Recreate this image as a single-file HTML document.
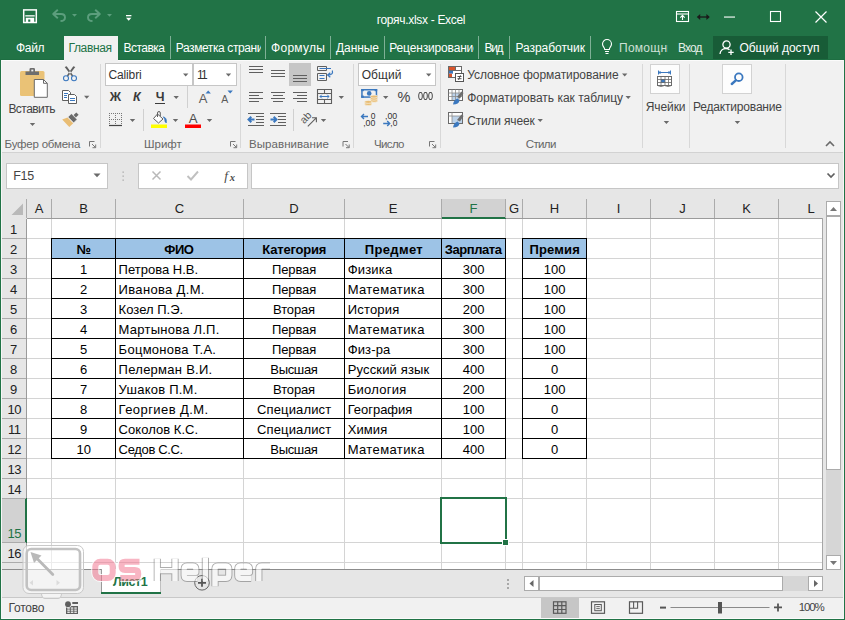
<!DOCTYPE html>
<html><head><meta charset="utf-8"><title>excel</title>
<style>
*{box-sizing:border-box;margin:0;padding:0}
html,body{width:845px;height:620px;overflow:hidden;background:#e6e6e6;font-family:"Liberation Sans",sans-serif;}
.abs{position:absolute}
#app{position:relative;width:845px;height:620px;overflow:hidden;background:#e6e6e6}
.t{position:absolute;white-space:nowrap;line-height:1}
.tab{position:absolute;top:41px;color:#fff;font-size:13px;line-height:14px;white-space:nowrap}
.sep{position:absolute;top:36px;width:1px;height:23px;background:#7fb096}
.rl{position:absolute;font-size:12.5px;color:#444;white-space:nowrap;line-height:14px}
.gl{position:absolute;font-size:12.5px;color:#666;white-space:nowrap;line-height:14px}
.ch{position:absolute;top:201px;font-size:13px;color:#222;text-align:center;line-height:15px}
.rh{position:absolute;left:1px;width:25px;font-size:13px;color:#222;text-align:center;line-height:15px}
.c{position:absolute;font-size:13px;color:#000;white-space:nowrap;line-height:15px;letter-spacing:-0.2px}
.hb{font-weight:bold}
.vl{position:absolute;width:1px;background:#d4d4d4}
.hl{position:absolute;height:1px;background:#d4d4d4}
.bk{position:absolute;background:#000}
</style></head><body><div id="app">

<div class="abs" style="left:0;top:0;width:845px;height:60px;background:#217346"></div>
<div class="abs" style="left:1px;top:60px;width:843px;height:92px;background:#f1f1f1"></div>
<div class="abs" style="left:1px;top:152px;width:843px;height:1px;background:#d2d2d2"></div>
<div class="abs" style="left:0;top:0;width:1px;height:620px;background:#217346"></div>
<div class="abs" style="left:844px;top:0;width:1px;height:620px;background:#217346"></div>
<div class="abs" style="left:0;top:619px;width:845px;height:1px;background:#217346"></div>
<div class="abs" style="left:1px;top:60px;width:843px;height:1px;background:#fbfbfb"></div>
<div class="abs" style="left:0px;top:59px;width:64px;height:1px;background:#1e6e42"></div><div class="abs" style="left:118px;top:59px;width:727px;height:1px;background:#1e6e42"></div>
<!-- title bar -->
<svg class="abs" style="left:0;top:0" width="845" height="36" viewBox="0 0 845 36">
 <!-- save icon -->
 <rect x="23.700" y="9.900" width="12.600" height="12.600" fill="none" stroke="#fff" stroke-width="1.500"/>
 <rect x="25.300" y="15.200" width="9.400" height="1.300" fill="#fff"/>
 <path d="M25.800 17.800 H34.200 V22.500 H30.300 V19.500 H28.200 V22.500 H25.800 Z" fill="#fff"/>
 <!-- undo -->
 <g fill="none" stroke="#5c9e7d" stroke-width="1.900" stroke-linejoin="round">
  <path d="M53.500 14 H61 Q65 14 65 17.500 Q65 21 60.500 21"/>
  <path d="M57.800 9.700 L53.200 14 L57.800 18.300"/>
 </g>
 <path d="M72 14 h5 l-2.500 2.800 z" fill="#5c9e7d"/>
 <!-- redo -->
 <g fill="none" stroke="#5c9e7d" stroke-width="1.900" stroke-linejoin="round">
  <path d="M99.500 14 H92 Q88 14 88 17.500 Q88 21 92.500 21"/>
  <path d="M95.200 9.700 L99.800 14 L95.200 18.300"/>
 </g>
 <path d="M107 14 h5 l-2.500 2.800 z" fill="#5c9e7d"/>
 <!-- customize -->
 <rect x="126" y="15" width="5.400" height="1.300" fill="#fff"/>
 <path d="M126 17.700 h5.400 l-2.700 3 z" fill="#fff"/>
 <!-- ribbon display options -->
 <g fill="none" stroke="#fff" stroke-width="1.1">
  <rect x="676.5" y="11.5" width="12" height="10"/>
  <path d="M676.5 14 H688.5"/>
  <path d="M682.5 20 V15.5 M680.3 17.6 L682.5 15.4 L684.7 17.6"/>
 </g>
 <!-- double arrow -->
 <g fill="none" stroke="#1a1a1a" stroke-width="1.3">
  <path d="M698.5 17 H708"/>
 </g>
 <path d="M696.8 17 l3.4 -3 v6 z M709.8 17 l-3.4 -3 v6 z" fill="#1a1a1a"/>
 <!-- minimize -->
 <rect x="724" y="16.5" width="11" height="1.1" fill="#fff"/>
 <!-- maximize -->
 <rect x="770.5" y="11.5" width="10" height="10" fill="none" stroke="#fff" stroke-width="1.1"/>
 <!-- close -->
 <path d="M815.5 11.5 L826.5 22.5 M826.5 11.5 L815.5 22.5" stroke="#fff" stroke-width="1.2" fill="none"/>
</svg>
<div class="t" style="left:376.70px;top:11.74px;font-size:12px;line-height:16px;color:#fff;letter-spacing:-0.311px;">горяч.xlsx - Excel</div>

<!-- tabs -->
<div class="abs" style="left:64px;top:36px;width:54px;height:25px;background:#f1f1f1"></div>
<div class="t" style="left:16.00px;top:39.84px;font-size:12px;line-height:16px;color:#fff;letter-spacing:-0.330px;">Файл</div>
<div class="t" style="left:68.50px;top:39.84px;font-size:12px;line-height:16px;color:#217346;letter-spacing:-0.365px;">Главная</div>
<div class="t" style="left:123.50px;top:39.84px;font-size:12px;line-height:16px;color:#fff;letter-spacing:-0.518px;">Вставка</div>
<div class="sep" style="left:170px"></div>
<div class="t" style="left:175.70px;top:39.84px;font-size:12px;line-height:16px;color:#fff;letter-spacing:-0.398px;width:85.5px;overflow:hidden;">Разметка страницы</div>
<div class="sep" style="left:265px"></div>
<div class="t" style="left:271.00px;top:39.84px;font-size:12px;line-height:16px;color:#fff;letter-spacing:0.295px;">Формулы</div>
<div class="sep" style="left:330px"></div>
<div class="t" style="left:336.00px;top:39.84px;font-size:12px;line-height:16px;color:#fff;letter-spacing:-0.070px;">Данные</div>
<div class="sep" style="left:384px"></div>
<div class="t" style="left:389.30px;top:39.84px;font-size:12px;line-height:16px;color:#fff;letter-spacing:-0.165px;width:85px;overflow:hidden;">Рецензирование</div>
<div class="sep" style="left:478px"></div>
<div class="t" style="left:484.50px;top:39.84px;font-size:12px;line-height:16px;color:#fff;letter-spacing:-1.360px;">Вид</div>
<div class="sep" style="left:509px"></div>
<div class="t" style="left:515.50px;top:39.84px;font-size:12px;line-height:16px;color:#fff;letter-spacing:-0.055px;">Разработчик</div>
<div class="sep" style="left:590px"></div>
<svg class="abs" style="left:599.6px;top:38.3px" width="14" height="18" viewBox="0 0 14 18"><g fill="none" stroke="#fff" stroke-width="1.1"><path d="M4.7 11.5 C4.7 9.5 2.5 8.7 2.5 6 A4.5 4.5 0 0 1 11.500 6 C11.5 8.700 9.300 9.500 9.3 11.5 Z"/><path d="M5 13.500 H9 M5.500 15.500 H8.500"/></g></svg>
<div class="t" style="left:619.00px;top:39.84px;font-size:12px;line-height:16px;color:#cfe0d6;letter-spacing:0.258px;width:49px;overflow:hidden;">Помощник</div>
<div class="t" style="left:678.00px;top:39.84px;font-size:12px;line-height:16px;color:#e4efe8;letter-spacing:-0.883px;">Вход</div>
<div class="abs" style="left:713px;top:36px;width:115px;height:23px;background:#185c37"></div>
<svg class="abs" style="left:718px;top:38px" width="18" height="18" viewBox="0 0 18 18"><g fill="none" stroke="#fff" stroke-width="1.3"><circle cx="8.5" cy="6.5" r="3.6"/><path d="M2 16 C2.200 12.500 5 10.500 8 10.500 C9.500 10.500 10.500 11 11.500 11.800"/><path d="M13 11.500 V17 M10.300 14.300 H15.700"/></g></svg>
<div class="t" style="left:739.50px;top:39.84px;font-size:12px;line-height:16px;color:#fff;letter-spacing:-0.058px;">Общий доступ</div>

<!-- ribbon group separators -->
<div class="abs" style="left:100px;top:64px;width:1px;height:84px;background:#d8d8d8"></div>
<div class="abs" style="left:240px;top:64px;width:1px;height:84px;background:#d8d8d8"></div>
<div class="abs" style="left:353px;top:64px;width:1px;height:84px;background:#d8d8d8"></div>
<div class="abs" style="left:440px;top:64px;width:1px;height:84px;background:#d8d8d8"></div>
<div class="abs" style="left:642px;top:64px;width:1px;height:84px;background:#d8d8d8"></div>
<div class="abs" style="left:689px;top:64px;width:1px;height:84px;background:#d8d8d8"></div>
<div class="abs" style="left:785px;top:64px;width:1px;height:84px;background:#d8d8d8"></div>
<!-- small separators -->
<div class="abs" style="left:187px;top:86px;width:1px;height:22px;background:#d0d0d0"></div>
<div class="abs" style="left:143px;top:109px;width:1px;height:22px;background:#d0d0d0"></div>
<div class="abs" style="left:293px;top:109px;width:1px;height:22px;background:#d0d0d0"></div>

<!-- clipboard group -->
<svg class="abs" style="left:0;top:60px" width="102" height="92" viewBox="0 0 102 92">
 <!-- paste -->
 <rect x="20" y="11" width="24.500" height="25" rx="1.500" fill="#eac276"/>
 <path d="M25.500 15 V11.500 H29.500 V9.300 Q29.500 8 30.800 8 H33.700 Q35 8 35 9.300 V11.500 H39 V15 Z" fill="#6e6e6e"/>
 <rect x="31.300" y="9.600" width="2" height="1.800" fill="#f1f1f1"/>
 <path d="M34.300 19.500 H43.500 L47.300 23.300 V37.300 H34.300 Z" fill="#fff" stroke="#6a6a6a" stroke-width="1"/>
 <path d="M43.500 19.500 V23.300 H47.300" fill="none" stroke="#6a6a6a" stroke-width="1"/>
 <path d="M29.800 63 h5.400 l-2.700 3 z" fill="#6a6a6a"/>
 <!-- scissors -->
 <path d="M64.700 7 L66.700 6.200 L73.200 15.600 L72 16.500 Z M75.300 7 L73.300 6.200 L66.800 15.600 L68 16.500 Z" fill="#5f5f5f"/>
 <circle cx="66" cy="18.200" r="2.500" fill="none" stroke="#3b78bf" stroke-width="1.100"/>
 <circle cx="74" cy="18.200" r="2.500" fill="none" stroke="#3b78bf" stroke-width="1.100"/>
 <!-- copy -->
 <g stroke="#5f5f5f" stroke-width="1" fill="#fff">
  <path d="M62.500 30.500 H68.500 L70.500 32.500 V40.500 H62.500 Z"/>
  <path d="M68.500 34.500 H74.500 L76.500 36.500 V43.500 H68.500 Z"/>
 </g>
 <path d="M64 33.500 h4 M64 35.500 h3 M64 37.500 h3 M70 38.500 h5 M70 40.500 h5" stroke="#3b78bf" stroke-width="1" fill="none"/>
 <path d="M84 35.800 h5.400 l-2.700 3 z" fill="#6a6a6a"/>
 <!-- format painter -->
 <path d="M62.200 59.600 L67.500 57.600 L73.200 63.300 L69.300 66.900 Z" fill="#e9bd74"/>
 <path d="M68 57 L71.500 53.700 L77 59.400 L73.700 62.800 Z" fill="#6a6a6a" stroke="#f1f1f1" stroke-width=".5"/>
 <path d="M73.600 55 L76.300 52.400 L78.600 54.800 L75.900 57.400 Z" fill="#6a6a6a"/>
 <!-- launcher -->
 <path d="M89.500 86.500 V81.500 H94.500" fill="none" stroke="#777" stroke-width="1"/>
 <path d="M92 84 L95.500 87.500 M95.700 84.500 V87.700 H92.500" fill="none" stroke="#777" stroke-width="1"/>
</svg>
<div class="t" style="left:8.40px;top:100.84px;font-size:12px;line-height:16px;color:#444;letter-spacing:-0.540px;">Вставить</div>
<div class="t" style="left:4.60px;top:137.02px;font-size:11.5px;line-height:15px;color:#666;letter-spacing:-0.216px;">Буфер обмена</div>

<!-- font group -->
<div class="abs" style="left:105px;top:63px;width:88px;height:23px;background:#fff;border:1px solid #c6c6c6"></div>
<div class="abs" style="left:193px;top:63px;width:44px;height:23px;background:#fff;border:1px solid #c6c6c6;border-left:1px solid #c6c6c6"></div>
<div class="t" style="left:108.50px;top:66.84px;font-size:12px;line-height:16px;color:#333;letter-spacing:-0.137px;">Calibri</div>
<div class="t" style="left:197.00px;top:66.84px;font-size:12px;line-height:16px;color:#333;letter-spacing:-1.850px;">11</div>
<div class="t" style="left:109.66px;top:89.17px;font-size:12.5px;line-height:16px;color:#3b3b3b;font-weight:bold;">Ж</div>
<div class="t" style="left:133.00px;top:89.17px;font-size:12.5px;line-height:16px;color:#3b3b3b;font-weight:bold;font-style:italic;">К</div>
<div class="t" style="left:155.80px;top:89.17px;font-size:12.5px;line-height:16px;color:#3b3b3b;font-weight:bold;">Ч</div><div class="abs" style="left:155px;top:103px;width:10px;height:1px;background:#3b3b3b"></div>
<div class="t" style="left:198.80px;top:89.60px;font-size:13px;line-height:17px;color:#5a5a5a;">А</div>
<div class="t" style="left:221.30px;top:91.96px;font-size:10.5px;line-height:14px;color:#5a5a5a;">А</div>
<div class="t" style="left:188.70px;top:110.33px;font-size:13.2px;line-height:17px;color:#4c4c4c;">А</div>
<svg class="abs" style="left:100px;top:60px" width="142" height="92" viewBox="0 0 142 92">
 <path d="M83 13.500 h5.400 l-2.700 3 z M125.800 13.500 h5.400 l-2.700 3 z M73.500 36 h5.400 l-2.700 3 z M29.800 59 h5.400 l-2.700 3 z M72.800 59 h5.400 l-2.700 3 z M106.800 59 h5.400 l-2.700 3 z" fill="#6a6a6a"/>
 <path d="M105.500 33.500 l2.700 -3 l2.700 3 z" fill="#3b78bf"/>
 <path d="M127.500 30.500 h5.400 l-2.700 3 z" fill="#3b78bf"/>
 <!-- borders icon -->
 <g stroke="#777" stroke-width="1" stroke-dasharray="1 1" fill="none">
  <path d="M9.500 53 V66 M15.500 53 V66 M21.500 53 V66 M9 53.500 H22 M9 59.500 H22"/>
 </g>
 <path d="M9 65.500 H22" stroke="#444" stroke-width="1.200"/>
 <!-- fill bucket -->
 <rect x="51" y="64.500" width="16" height="3.500" fill="#ffff00"/>
 <path d="M57.500 54 L63 59 L58.500 63 L53.500 58.500 Z" fill="#fff" stroke="#5f5f5f" stroke-width="1"/>
 <path d="M57.500 57 V53 Q57.500 51.500 59 51.500 Q60.300 51.500 60.300 53 V56" fill="none" stroke="#5f5f5f" stroke-width="1"/>
 <path d="M63.200 56.800 Q67.300 57.800 66.300 63 Q64.500 62 64.600 59 Z" fill="#3b78bf" stroke="#3b78bf" stroke-width=".6"/>
 <!-- font color bar -->
 <rect x="85" y="64.500" width="16" height="3.500" fill="#ff0000"/>
 <!-- launcher -->
 <path d="M130.500 86.500 V81.500 H135.500" fill="none" stroke="#777" stroke-width="1"/>
 <path d="M133 84 L136.500 87.500 M136.700 84.500 V87.700 H133.500" fill="none" stroke="#777" stroke-width="1"/>
</svg>
<div class="t" style="left:144.00px;top:137.02px;font-size:11.5px;line-height:15px;color:#666;letter-spacing:-0.009px;">Шрифт</div>

<!-- alignment group -->
<div class="abs" style="left:289px;top:63px;width:22px;height:23px;background:#c6c6c6"></div>
<svg class="abs" style="left:240px;top:60px" width="115" height="92" viewBox="0 0 115 92">
 <g stroke="#5f5f5f" stroke-width="1" fill="none">
  <path d="M9 6.500 H23 M9 9.500 H23 M9 12.500 H23"/>
  <path d="M31 10.500 H45 M31 13.500 H45 M31 16.500 H45"/>
  <path d="M53 15.500 H67 M53 18.500 H67 M53 21.500 H67"/>
  <path d="M9 32.500 H23 M9 35.500 H19 M9 38.500 H23 M9 41.500 H19"/>
  <path d="M31 32.500 H45 M33 35.500 H43 M31 38.500 H45 M33 41.500 H43"/>
  <path d="M53 32.500 H67 M57 35.500 H67 M53 38.500 H67 M57 41.500 H67"/>
  <path d="M8 53.500 H24 M16 56.500 H24 M16 59.500 H24 M16 62.500 H24 M8 65.500 H24"/>
  <path d="M30 53.500 H46 M38 56.500 H46 M38 59.500 H46 M38 62.500 H46 M30 65.500 H46"/>
  <!-- wrap -->
  <path d="M77.500 6.500 H86.500 V10.500 H77.500 Z M77.500 13.500 H86.500 V20.500 H77.500 Z"/>
  <!-- merge -->
  <path d="M77.500 29.500 H91.500 V43.500 H77.500 Z M77.500 33.500 H91.500 M77.500 39.500 H91.500 M84.500 29.500 V33.500 M84.500 39.500 V43.500" stroke-width="1.100"/>
  <!-- orientation -->
  <path d="M67.800 66.400 L76 58.200 M72 57.800 H76.400 V62.200" stroke-width="1.100"/>
 </g>
 <g stroke="#3b78bf" stroke-width="1.200" fill="none">
  <path d="M79.500 8.500 H91 M79.500 15.500 H84.500 M79.500 18.500 H84.500" stroke-width="1"/>
  <path d="M92.300 10.500 Q93.500 15 88 15 M90.300 12.700 L87.600 15 L90.300 17.300"/>
  <path d="M80 36.500 H89 M81.800 34.700 L80 36.500 L81.800 38.300 M87.200 34.700 L89 36.500 L87.200 38.300" stroke-width="1"/>
  <path d="M9.500 59.500 H14.500 M11.300 56.700 L8.500 59.500 L11.300 62.300" stroke-width="2"/>
  <path d="M30.500 59.500 H35.500 M33.700 56.700 L36.500 59.500 L33.700 62.300" stroke-width="2"/>
 </g>
 <text x="0" y="0" font-family="Liberation Sans" font-size="10.500" fill="#555" transform="translate(64.300 64.200) rotate(-47)">ab</text>
 <path d="M98.600 36 h5.400 l-2.700 3 z M80.800 59 h5.400 l-2.700 3 z" fill="#6a6a6a"/>
 <path d="M103 86.500 V81.500 H108" fill="none" stroke="#777" stroke-width="1"/>
 <path d="M105.500 84 L109 87.500 M109.200 84.500 V87.700 H106" fill="none" stroke="#777" stroke-width="1"/>
</svg>
<div class="t" style="left:249.00px;top:137.02px;font-size:11.5px;line-height:15px;color:#666;letter-spacing:0.059px;">Выравнивание</div>

<!-- number group -->
<div class="abs" style="left:358px;top:63px;width:78px;height:23px;background:#fff;border:1px solid #c6c6c6"></div>
<div class="t" style="left:361.70px;top:66.84px;font-size:12px;line-height:16px;color:#333;letter-spacing:0.080px;">Общий</div>
<div class="t" style="left:397.50px;top:88.28px;font-size:14.5px;line-height:19px;color:#444;">%</div>
<div class="t" style="left:417.80px;top:90.13px;font-size:10px;line-height:13px;color:#222;transform:scaleX(0.9);transform-origin:left;">000</div>
<svg class="abs" style="left:353px;top:60px" width="90" height="92" viewBox="0 0 90 92">
 <path d="M73 13.500 h5.400 l-2.700 3 z M30 36 h5.400 l-2.700 3 z" fill="#6a6a6a"/>
 <!-- currency -->
 <rect x="8.200" y="29" width="16" height="8.800" fill="#3b78bf"/>
 <rect x="9.700" y="30.500" width="13" height="5.800" fill="#f1f1f1"/>
 <rect x="8.200" y="29" width="2.600" height="2.200" fill="#3b78bf"/><rect x="21.600" y="29" width="2.600" height="2.200" fill="#3b78bf"/><rect x="8.200" y="35.600" width="2.600" height="2.200" fill="#3b78bf"/>
 <circle cx="16.200" cy="33.400" r="2.300" fill="#3b78bf"/>
 <g fill="#e9bd74" stroke="#f5f0e4" stroke-width=".7">
  <ellipse cx="21" cy="40.800" rx="3.700" ry="1.500"/><ellipse cx="21" cy="38.700" rx="3.700" ry="1.500"/><ellipse cx="21" cy="36.600" rx="3.700" ry="1.500"/>
  <ellipse cx="15.300" cy="44" rx="3.700" ry="1.500"/><ellipse cx="15.300" cy="41.900" rx="3.700" ry="1.500"/>
 </g>
 <!-- inc/dec decimal -->
 <path d="M8.500 56.500 H15 M11 54 L8.500 56.500 L11 59" stroke="#3b78bf" stroke-width="1.400" fill="none"/>
 <path d="M30.200 63.500 H36.700 M34.200 61 L36.700 63.500 L34.200 66" stroke="#3b78bf" stroke-width="1.400" fill="none"/>
 <g font-family="Liberation Sans" font-size="8.600" fill="#333">
 <text x="17.800" y="58.800" textLength="4.700" lengthAdjust="spacingAndGlyphs">0</text>
 <text x="10.200" y="65.700" textLength="12.200" lengthAdjust="spacingAndGlyphs">,00</text>
 <text x="32" y="58.800" textLength="12.200" lengthAdjust="spacingAndGlyphs">,00</text>
 <text x="37.300" y="65.700" textLength="7" lengthAdjust="spacingAndGlyphs">,0</text>
 </g>
 <path d="M76.500 86.500 V81.500 H81.500" fill="none" stroke="#777" stroke-width="1"/>
 <path d="M79 84 L82.500 87.500 M82.700 84.500 V87.700 H79.500" fill="none" stroke="#777" stroke-width="1"/>
</svg>
<div class="t" style="left:374.00px;top:137.02px;font-size:11.5px;line-height:15px;color:#666;letter-spacing:-0.641px;">Число</div>

<!-- styles group -->
<svg class="abs" style="left:440px;top:60px" width="204" height="92" viewBox="0 0 204 92">
 <!-- cond format -->
 <rect x="8.500" y="6.500" width="13" height="11" fill="#fff" stroke="#6a6a6a"/>
 <rect x="9" y="7" width="6" height="3.400" fill="#d9552c"/><rect x="9" y="10.400" width="4" height="3.300" fill="#3b78bf"/><rect x="9" y="13.700" width="3" height="3.300" fill="#d9552c"/>
 <path d="M15.500 7 V10.500 M8.500 10.500 H21.500" stroke="#6a6a6a" fill="none"/>
 <rect x="15.500" y="13.500" width="8" height="8" fill="#fff" stroke="#555"/>
 <path d="M17.500 16.500 H21.500 M17.500 18.700 H21.500 M20.500 15.300 L18.500 20" stroke="#444" stroke-width=".9" fill="none"/>
 <!-- format as table -->
 <rect x="8.500" y="29.500" width="14" height="11" fill="#fff" stroke="#6a6a6a"/>
 <rect x="12" y="33" width="7" height="7" fill="#bdd3ea"/>
 <path d="M8.500 33 H22.500 M8.500 36.500 H22.500 M12 29.500 V40.500 M15.500 29.500 V40.500 M19 29.500 V40.500" stroke="#8a8a8a" stroke-width=".8" fill="none"/>
 <path d="M23.500 33 L20 38.500 L17 37 L21.500 31.500 Z" fill="#6e6e6e"/>
 <path d="M13 44.500 Q13.500 40 17.500 38.500 L19.500 40.500 Q19 44.500 13 44.500 Z" fill="#3b78bf"/>
 <!-- cell styles -->
 <rect x="8.500" y="52.500" width="14" height="11" fill="#fff" stroke="#6a6a6a"/>
 <rect x="12" y="56" width="10" height="7" fill="#bdd3ea"/>
 <path d="M8.500 56 H22.500 M12 52.500 V63.500" stroke="#8a8a8a" stroke-width=".8" fill="none"/>
 <path d="M23.500 56 L20 61.500 L17 60 L21.500 54.500 Z" fill="#6e6e6e"/>
 <path d="M13 67.500 Q13.500 63 17.500 61.500 L19.500 63.500 Q19 67.500 13 67.500 Z" fill="#3b78bf"/>
 <path d="M182 13.500 h5.400 l-2.700 3 z M185.500 36 h5.400 l-2.700 3 z M97.500 59 h5.400 l-2.700 3 z" fill="#6a6a6a"/>
</svg>
<div class="t" style="left:467.20px;top:66.84px;font-size:12px;line-height:16px;color:#444;letter-spacing:-0.053px;">Условное форматирование</div>
<div class="t" style="left:467.20px;top:89.84px;font-size:12px;line-height:16px;color:#444;letter-spacing:-0.013px;">Форматировать как таблицу</div>
<div class="t" style="left:467.20px;top:112.84px;font-size:12px;line-height:16px;color:#444;letter-spacing:-0.180px;">Стили ячеек</div>
<div class="t" style="left:525.70px;top:137.02px;font-size:11.5px;line-height:15px;color:#666;letter-spacing:-0.605px;">Стили</div>

<!-- cells / editing -->
<div class="abs" style="left:650px;top:64px;width:30px;height:30px;background:#fdfdfd;border:1px solid #d2d2d2"></div>
<div class="abs" style="left:722px;top:64px;width:30px;height:30px;background:#fdfdfd;border:1px solid #d2d2d2"></div>
<svg class="abs" style="left:642px;top:60px" width="202" height="92" viewBox="0 0 202 92">
 <!-- cells icon -->
 <path d="M16.500 10.500 V14.500 M28.500 10.500 V14.500 M16.500 12.500 H28.500" stroke="#3b78bf" stroke-width="1" fill="none"/>
 <path d="M18.500 11 L17 12.500 L18.500 14 M26.500 11 L28 12.500 L26.500 14" stroke="#3b78bf" stroke-width="1" fill="none"/>
 <rect x="15.500" y="16.500" width="14" height="9" fill="#fff" stroke="#6a6a6a"/>
 <rect x="19" y="19" width="4" height="4" fill="#3b78bf"/>
 <path d="M15.500 19.500 H29.500 M15.500 22.500 H29.500 M19 16.500 V25.500 M23 16.500 V25.500 M26.500 16.500 V25.500" stroke="#6a6a6a" stroke-width=".8" fill="none"/>
 <path d="M15.500 25.500 Q19 27.500 22.500 25.500 Q26 27.500 29.500 25.500" stroke="#6a6a6a" stroke-width=".9" fill="none"/>
 <!-- search icon -->
 <circle cx="96.800" cy="17.200" r="3.800" fill="none" stroke="#3b78bf" stroke-width="1.800"/>
 <path d="M93.800 20.300 L89.800 24" stroke="#3b78bf" stroke-width="2.400" fill="none" stroke-linecap="round"/>
 <path d="M21.700 61 h5.400 l-2.700 3 z M92.700 61 h5.400 l-2.700 3 z" fill="#6a6a6a"/>
 <!-- collapse chevron -->
 <path d="M184 86 L188 82 L192 86" fill="none" stroke="#6a6a6a" stroke-width="1.600"/>
</svg>
<div class="t" style="left:645.80px;top:98.84px;font-size:12px;line-height:16px;color:#444;letter-spacing:-0.112px;">Ячейки</div>
<div class="t" style="left:693.00px;top:98.84px;font-size:12px;line-height:16px;color:#444;letter-spacing:-0.185px;">Редактирование</div>

<!-- formula bar -->
<div class="abs" style="left:6px;top:163px;width:102px;height:26px;background:#fff;border:1px solid #c6c6c6"></div>
<div class="abs" style="left:138px;top:163px;width:110px;height:26px;background:#fff;border:1px solid #c6c6c6"></div>
<div class="abs" style="left:251px;top:163px;width:588px;height:26px;background:#fff;border:1px solid #c6c6c6"></div>
<div class="t" style="left:13.30px;top:168.47px;font-size:12.5px;line-height:16px;color:#444;letter-spacing:-0.366px;">F15</div>
<svg class="abs" style="left:0;top:160px" width="845" height="32" viewBox="0 0 845 32">
 <path d="M93.500 13.500 h7 l-3.500 3.800 z" fill="#6a6a6a"/>
 <rect x="122.500" y="11.500" width="1.300" height="1.300" fill="#a8a8a8"/><rect x="122.500" y="15.500" width="1.300" height="1.300" fill="#a8a8a8"/><rect x="122.500" y="19.500" width="1.300" height="1.300" fill="#a8a8a8"/>
 <path d="M152.500 11.500 L160.500 19.500 M160.500 11.500 L152.500 19.500" stroke="#b8b8b8" stroke-width="1.500" fill="none"/>
 <path d="M187.500 16 L191 19.500 L198 11.500" stroke="#c0c0c0" stroke-width="1.900" fill="none"/>
 <path d="M827.500 13.500 L831 17 L834.500 13.500" stroke="#5f5f5f" stroke-width="1.700" fill="none"/>
</svg>
<div class="t" style="left:224.300px;top:168.800px;font-family:'Liberation Serif',serif;font-style:italic;font-size:13.500px;line-height:14px;color:#4a4a4a">f</div>
<div class="t" style="left:229.800px;top:171.800px;font-family:'Liberation Serif',serif;font-style:italic;font-size:10.500px;line-height:11px;color:#4a4a4a;font-weight:bold">x</div>

<div class="abs" style="left:27px;top:219px;width:796px;height:350px;background:#fff"></div>
<div class="abs" style="left:1px;top:199px;width:826px;height:20px;background:#e6e6e6"></div>
<div class="abs" style="left:1px;top:219px;width:26px;height:350px;background:#e6e6e6"></div>
<div class="abs" style="left:27px;top:218px;width:796px;height:1px;background:#9b9b9b"></div>
<div class="abs" style="left:26px;top:219px;width:1px;height:350px;background:#9b9b9b"></div>
<div class="abs" style="left:442px;top:199px;width:64px;height:18px;background:#d2d2d2"></div>
<div class="abs" style="left:442px;top:217px;width:64px;height:2px;background:#217346"></div>
<div class="abs" style="left:1px;top:499px;width:24px;height:43px;background:#d2d2d2"></div>
<div class="abs" style="left:25px;top:498px;width:2px;height:45px;background:#217346"></div>
<div class="abs" style="left:51px;top:199px;width:1px;height:19px;background:#ababab"></div>
<div class="ch" style="left:27px;width:24px;color:#222">A</div>
<div class="abs" style="left:115px;top:199px;width:1px;height:19px;background:#ababab"></div>
<div class="ch" style="left:52px;width:63px;color:#222">B</div>
<div class="abs" style="left:243px;top:199px;width:1px;height:19px;background:#ababab"></div>
<div class="ch" style="left:116px;width:127px;color:#222">C</div>
<div class="abs" style="left:344px;top:199px;width:1px;height:19px;background:#ababab"></div>
<div class="ch" style="left:244px;width:100px;color:#222">D</div>
<div class="abs" style="left:441px;top:199px;width:1px;height:19px;background:#ababab"></div>
<div class="ch" style="left:345px;width:96px;color:#222">E</div>
<div class="abs" style="left:505px;top:199px;width:1px;height:19px;background:#ababab"></div>
<div class="ch" style="left:442px;width:63px;color:#217346">F</div>
<div class="abs" style="left:522px;top:199px;width:1px;height:19px;background:#ababab"></div>
<div class="ch" style="left:506px;width:16px;color:#222">G</div>
<div class="abs" style="left:586px;top:199px;width:1px;height:19px;background:#ababab"></div>
<div class="ch" style="left:523px;width:63px;color:#222">H</div>
<div class="abs" style="left:650px;top:199px;width:1px;height:19px;background:#ababab"></div>
<div class="ch" style="left:587px;width:63px;color:#222">I</div>
<div class="abs" style="left:714px;top:199px;width:1px;height:19px;background:#ababab"></div>
<div class="ch" style="left:651px;width:63px;color:#222">J</div>
<div class="abs" style="left:778px;top:199px;width:1px;height:19px;background:#ababab"></div>
<div class="ch" style="left:715px;width:63px;color:#222">K</div>
<div class="ch" style="left:779px;width:64px;color:#222">L</div>
<div class="abs" style="left:26px;top:199px;width:1px;height:19px;background:#ababab"></div>
<svg class="abs" style="left:9px;top:201px" width="16" height="16"><path d="M14 2.500 L14 14 L2.500 14 Z" fill="#b9b9b9"/></svg>
<div class="vl" style="left:51px;top:219px;height:350px"></div>
<div class="vl" style="left:115px;top:219px;height:350px"></div>
<div class="vl" style="left:243px;top:219px;height:350px"></div>
<div class="vl" style="left:344px;top:219px;height:350px"></div>
<div class="vl" style="left:441px;top:219px;height:350px"></div>
<div class="vl" style="left:505px;top:219px;height:350px"></div>
<div class="vl" style="left:522px;top:219px;height:350px"></div>
<div class="vl" style="left:586px;top:219px;height:350px"></div>
<div class="vl" style="left:650px;top:219px;height:350px"></div>
<div class="vl" style="left:714px;top:219px;height:350px"></div>
<div class="vl" style="left:778px;top:219px;height:350px"></div>
<div class="vl" style="left:822px;top:219px;height:350px"></div>
<div class="hl" style="left:27px;top:238px;width:796px"></div>
<div class="hl" style="left:1px;top:238px;width:25px;background:#ababab"></div>
<div class="rh" style="top:222px;color:#222;">1</div>
<div class="hl" style="left:27px;top:258px;width:796px"></div>
<div class="hl" style="left:1px;top:258px;width:25px;background:#ababab"></div>
<div class="rh" style="top:242px;color:#222;">2</div>
<div class="hl" style="left:27px;top:278px;width:796px"></div>
<div class="hl" style="left:1px;top:278px;width:25px;background:#ababab"></div>
<div class="rh" style="top:262px;color:#222;">3</div>
<div class="hl" style="left:27px;top:298px;width:796px"></div>
<div class="hl" style="left:1px;top:298px;width:25px;background:#ababab"></div>
<div class="rh" style="top:282px;color:#222;">4</div>
<div class="hl" style="left:27px;top:318px;width:796px"></div>
<div class="hl" style="left:1px;top:318px;width:25px;background:#ababab"></div>
<div class="rh" style="top:302px;color:#222;">5</div>
<div class="hl" style="left:27px;top:338px;width:796px"></div>
<div class="hl" style="left:1px;top:338px;width:25px;background:#ababab"></div>
<div class="rh" style="top:322px;color:#222;">6</div>
<div class="hl" style="left:27px;top:358px;width:796px"></div>
<div class="hl" style="left:1px;top:358px;width:25px;background:#ababab"></div>
<div class="rh" style="top:342px;color:#222;">7</div>
<div class="hl" style="left:27px;top:378px;width:796px"></div>
<div class="hl" style="left:1px;top:378px;width:25px;background:#ababab"></div>
<div class="rh" style="top:362px;color:#222;">8</div>
<div class="hl" style="left:27px;top:398px;width:796px"></div>
<div class="hl" style="left:1px;top:398px;width:25px;background:#ababab"></div>
<div class="rh" style="top:382px;color:#222;">9</div>
<div class="hl" style="left:27px;top:418px;width:796px"></div>
<div class="hl" style="left:1px;top:418px;width:25px;background:#ababab"></div>
<div class="rh" style="top:402px;color:#222;letter-spacing:-0.6px;padding-left:1.5px;">10</div>
<div class="hl" style="left:27px;top:438px;width:796px"></div>
<div class="hl" style="left:1px;top:438px;width:25px;background:#ababab"></div>
<div class="rh" style="top:422px;color:#222;letter-spacing:-0.6px;padding-left:1.5px;">11</div>
<div class="hl" style="left:27px;top:458px;width:796px"></div>
<div class="hl" style="left:1px;top:458px;width:25px;background:#ababab"></div>
<div class="rh" style="top:442px;color:#222;letter-spacing:-0.6px;padding-left:1.5px;">12</div>
<div class="hl" style="left:27px;top:478px;width:796px"></div>
<div class="hl" style="left:1px;top:478px;width:25px;background:#ababab"></div>
<div class="rh" style="top:462px;color:#222;letter-spacing:-0.6px;padding-left:1.5px;">13</div>
<div class="hl" style="left:27px;top:498px;width:796px"></div>
<div class="hl" style="left:1px;top:498px;width:25px;background:#ababab"></div>
<div class="rh" style="top:482px;color:#222;letter-spacing:-0.6px;padding-left:1.5px;">14</div>
<div class="hl" style="left:27px;top:542px;width:796px"></div>
<div class="hl" style="left:1px;top:542px;width:25px;background:#ababab"></div>
<div class="rh" style="top:526px;color:#217346;letter-spacing:-0.6px;padding-left:1.5px;">15</div>
<div class="hl" style="left:27px;top:562px;width:796px"></div>
<div class="hl" style="left:1px;top:562px;width:25px;background:#ababab"></div>
<div class="rh" style="top:546px;color:#222;letter-spacing:-0.6px;padding-left:1.5px;">16</div>
<div class="abs" style="left:52px;top:239px;width:63px;height:19px;background:#9dc3e6"></div>
<div class="t" style="left:76.55px;top:240.80px;font-size:13px;line-height:17px;color:#000;font-weight:bold;letter-spacing:0.405px;">№</div>
<div class="abs" style="left:116px;top:239px;width:127px;height:19px;background:#9dc3e6"></div>
<div class="t" style="left:164.30px;top:240.80px;font-size:13px;line-height:17px;color:#000;font-weight:bold;letter-spacing:-0.475px;">ФИО</div>
<div class="abs" style="left:244px;top:239px;width:100px;height:19px;background:#9dc3e6"></div>
<div class="t" style="left:262.35px;top:240.80px;font-size:13px;line-height:17px;color:#000;font-weight:bold;letter-spacing:-0.190px;">Категория</div>
<div class="abs" style="left:345px;top:239px;width:96px;height:19px;background:#9dc3e6"></div>
<div class="t" style="left:364.75px;top:240.80px;font-size:13px;line-height:17px;color:#000;font-weight:bold;letter-spacing:0.350px;">Предмет</div>
<div class="abs" style="left:442px;top:239px;width:63px;height:19px;background:#9dc3e6"></div>
<div class="t" style="left:444.70px;top:240.80px;font-size:13px;line-height:17px;color:#000;font-weight:bold;letter-spacing:-0.422px;">Зарплата</div>
<div class="abs" style="left:523px;top:239px;width:63px;height:19px;background:#9dc3e6"></div>
<div class="t" style="left:529.40px;top:240.80px;font-size:13px;line-height:17px;color:#000;font-weight:bold;letter-spacing:0.174px;">Премия</div>
<div class="t" style="left:80.09px;top:260.80px;font-size:13px;line-height:17px;color:#000;">1</div>
<div class="t" style="left:118.60px;top:260.80px;font-size:13px;line-height:17px;color:#000;letter-spacing:0.006px;">Петрова Н.В.</div>
<div class="t" style="left:271.95px;top:260.80px;font-size:13px;line-height:17px;color:#000;letter-spacing:-0.110px;">Первая</div>
<div class="t" style="left:347.70px;top:260.80px;font-size:13px;line-height:17px;color:#000;letter-spacing:0.183px;">Физика</div>
<div class="t" style="left:462.76px;top:260.80px;font-size:13px;line-height:17px;color:#000;">300</div>
<div class="t" style="left:543.86px;top:260.80px;font-size:13px;line-height:17px;color:#000;">100</div>
<div class="t" style="left:80.09px;top:280.80px;font-size:13px;line-height:17px;color:#000;">2</div>
<div class="t" style="left:118.60px;top:280.80px;font-size:13px;line-height:17px;color:#000;letter-spacing:0.328px;">Иванова Д.М.</div>
<div class="t" style="left:271.95px;top:280.80px;font-size:13px;line-height:17px;color:#000;letter-spacing:-0.110px;">Первая</div>
<div class="t" style="left:347.70px;top:280.80px;font-size:13px;line-height:17px;color:#000;letter-spacing:0.379px;">Математика</div>
<div class="t" style="left:462.76px;top:280.80px;font-size:13px;line-height:17px;color:#000;">300</div>
<div class="t" style="left:543.86px;top:280.80px;font-size:13px;line-height:17px;color:#000;">100</div>
<div class="t" style="left:80.09px;top:300.80px;font-size:13px;line-height:17px;color:#000;">3</div>
<div class="t" style="left:118.60px;top:300.80px;font-size:13px;line-height:17px;color:#000;letter-spacing:0.024px;">Козел П.Э.</div>
<div class="t" style="left:273.05px;top:300.80px;font-size:13px;line-height:17px;color:#000;letter-spacing:-0.134px;">Вторая</div>
<div class="t" style="left:347.70px;top:300.80px;font-size:13px;line-height:17px;color:#000;letter-spacing:0.199px;">История</div>
<div class="t" style="left:462.76px;top:300.80px;font-size:13px;line-height:17px;color:#000;">200</div>
<div class="t" style="left:543.86px;top:300.80px;font-size:13px;line-height:17px;color:#000;">100</div>
<div class="t" style="left:80.09px;top:320.80px;font-size:13px;line-height:17px;color:#000;">4</div>
<div class="t" style="left:118.60px;top:320.80px;font-size:13px;line-height:17px;color:#000;letter-spacing:0.241px;">Мартынова Л.П.</div>
<div class="t" style="left:271.95px;top:320.80px;font-size:13px;line-height:17px;color:#000;letter-spacing:-0.110px;">Первая</div>
<div class="t" style="left:347.70px;top:320.80px;font-size:13px;line-height:17px;color:#000;letter-spacing:0.379px;">Математика</div>
<div class="t" style="left:462.76px;top:320.80px;font-size:13px;line-height:17px;color:#000;">300</div>
<div class="t" style="left:543.86px;top:320.80px;font-size:13px;line-height:17px;color:#000;">100</div>
<div class="t" style="left:80.09px;top:340.80px;font-size:13px;line-height:17px;color:#000;">5</div>
<div class="t" style="left:118.60px;top:340.80px;font-size:13px;line-height:17px;color:#000;letter-spacing:0.277px;">Боцмонова Т.А.</div>
<div class="t" style="left:271.95px;top:340.80px;font-size:13px;line-height:17px;color:#000;letter-spacing:-0.110px;">Первая</div>
<div class="t" style="left:347.70px;top:340.80px;font-size:13px;line-height:17px;color:#000;letter-spacing:0.135px;">Физ-ра</div>
<div class="t" style="left:462.76px;top:340.80px;font-size:13px;line-height:17px;color:#000;">300</div>
<div class="t" style="left:543.86px;top:340.80px;font-size:13px;line-height:17px;color:#000;">100</div>
<div class="t" style="left:80.09px;top:360.80px;font-size:13px;line-height:17px;color:#000;">6</div>
<div class="t" style="left:118.60px;top:360.80px;font-size:13px;line-height:17px;color:#000;letter-spacing:0.268px;">Пелерман В.И.</div>
<div class="t" style="left:270.30px;top:360.80px;font-size:13px;line-height:17px;color:#000;letter-spacing:-0.321px;">Высшая</div>
<div class="t" style="left:347.70px;top:360.80px;font-size:13px;line-height:17px;color:#000;letter-spacing:0.150px;">Русский язык</div>
<div class="t" style="left:462.76px;top:360.80px;font-size:13px;line-height:17px;color:#000;">400</div>
<div class="t" style="left:551.09px;top:360.80px;font-size:13px;line-height:17px;color:#000;">0</div>
<div class="t" style="left:80.09px;top:380.80px;font-size:13px;line-height:17px;color:#000;">7</div>
<div class="t" style="left:118.60px;top:380.80px;font-size:13px;line-height:17px;color:#000;letter-spacing:0.239px;">Ушаков П.М.</div>
<div class="t" style="left:273.05px;top:380.80px;font-size:13px;line-height:17px;color:#000;letter-spacing:-0.134px;">Вторая</div>
<div class="t" style="left:347.70px;top:380.80px;font-size:13px;line-height:17px;color:#000;letter-spacing:0.279px;">Биология</div>
<div class="t" style="left:462.76px;top:380.80px;font-size:13px;line-height:17px;color:#000;">200</div>
<div class="t" style="left:543.86px;top:380.80px;font-size:13px;line-height:17px;color:#000;">100</div>
<div class="t" style="left:80.09px;top:400.80px;font-size:13px;line-height:17px;color:#000;">8</div>
<div class="t" style="left:118.60px;top:400.80px;font-size:13px;line-height:17px;color:#000;letter-spacing:0.428px;">Георгиев Д.М.</div>
<div class="t" style="left:257.05px;top:400.80px;font-size:13px;line-height:17px;color:#000;letter-spacing:0.134px;">Специалист</div>
<div class="t" style="left:347.70px;top:400.80px;font-size:13px;line-height:17px;color:#000;letter-spacing:-0.030px;">География</div>
<div class="t" style="left:462.76px;top:400.80px;font-size:13px;line-height:17px;color:#000;">100</div>
<div class="t" style="left:551.09px;top:400.80px;font-size:13px;line-height:17px;color:#000;">0</div>
<div class="t" style="left:80.09px;top:420.80px;font-size:13px;line-height:17px;color:#000;">9</div>
<div class="t" style="left:118.60px;top:420.80px;font-size:13px;line-height:17px;color:#000;letter-spacing:0.039px;">Соколов К.С.</div>
<div class="t" style="left:257.05px;top:420.80px;font-size:13px;line-height:17px;color:#000;letter-spacing:0.134px;">Специалист</div>
<div class="t" style="left:347.70px;top:420.80px;font-size:13px;line-height:17px;color:#000;letter-spacing:0.084px;">Химия</div>
<div class="t" style="left:462.76px;top:420.80px;font-size:13px;line-height:17px;color:#000;">100</div>
<div class="t" style="left:551.09px;top:420.80px;font-size:13px;line-height:17px;color:#000;">0</div>
<div class="t" style="left:76.47px;top:440.80px;font-size:13px;line-height:17px;color:#000;">10</div>
<div class="t" style="left:118.60px;top:440.80px;font-size:13px;line-height:17px;color:#000;letter-spacing:-0.341px;">Седов С.С.</div>
<div class="t" style="left:270.30px;top:440.80px;font-size:13px;line-height:17px;color:#000;letter-spacing:-0.321px;">Высшая</div>
<div class="t" style="left:347.70px;top:440.80px;font-size:13px;line-height:17px;color:#000;letter-spacing:0.379px;">Математика</div>
<div class="t" style="left:462.76px;top:440.80px;font-size:13px;line-height:17px;color:#000;">400</div>
<div class="t" style="left:551.09px;top:440.80px;font-size:13px;line-height:17px;color:#000;">0</div>
<div class="bk" style="left:51px;top:238px;width:455px;height:1px"></div>
<div class="bk" style="left:522px;top:238px;width:65px;height:1px"></div>
<div class="bk" style="left:51px;top:258px;width:455px;height:1px"></div>
<div class="bk" style="left:522px;top:258px;width:65px;height:1px"></div>
<div class="bk" style="left:51px;top:278px;width:455px;height:1px"></div>
<div class="bk" style="left:522px;top:278px;width:65px;height:1px"></div>
<div class="bk" style="left:51px;top:298px;width:455px;height:1px"></div>
<div class="bk" style="left:522px;top:298px;width:65px;height:1px"></div>
<div class="bk" style="left:51px;top:318px;width:455px;height:1px"></div>
<div class="bk" style="left:522px;top:318px;width:65px;height:1px"></div>
<div class="bk" style="left:51px;top:338px;width:455px;height:1px"></div>
<div class="bk" style="left:522px;top:338px;width:65px;height:1px"></div>
<div class="bk" style="left:51px;top:358px;width:455px;height:1px"></div>
<div class="bk" style="left:522px;top:358px;width:65px;height:1px"></div>
<div class="bk" style="left:51px;top:378px;width:455px;height:1px"></div>
<div class="bk" style="left:522px;top:378px;width:65px;height:1px"></div>
<div class="bk" style="left:51px;top:398px;width:455px;height:1px"></div>
<div class="bk" style="left:522px;top:398px;width:65px;height:1px"></div>
<div class="bk" style="left:51px;top:418px;width:455px;height:1px"></div>
<div class="bk" style="left:522px;top:418px;width:65px;height:1px"></div>
<div class="bk" style="left:51px;top:438px;width:455px;height:1px"></div>
<div class="bk" style="left:522px;top:438px;width:65px;height:1px"></div>
<div class="bk" style="left:51px;top:458px;width:455px;height:1px"></div>
<div class="bk" style="left:522px;top:458px;width:65px;height:1px"></div>
<div class="bk" style="left:51px;top:238px;width:1px;height:221px"></div>
<div class="bk" style="left:115px;top:238px;width:1px;height:221px"></div>
<div class="bk" style="left:243px;top:238px;width:1px;height:221px"></div>
<div class="bk" style="left:344px;top:238px;width:1px;height:221px"></div>
<div class="bk" style="left:441px;top:238px;width:1px;height:221px"></div>
<div class="bk" style="left:505px;top:238px;width:1px;height:221px"></div>
<div class="bk" style="left:522px;top:238px;width:1px;height:221px"></div>
<div class="bk" style="left:586px;top:238px;width:1px;height:221px"></div>
<div class="abs" style="left:440px;top:497px;width:67px;height:47px;border:2px solid #217346"></div>
<div class="abs" style="left:502px;top:539px;width:7px;height:7px;background:#fff"></div>
<div class="abs" style="left:503px;top:540px;width:5px;height:5px;background:#217346"></div>
<!-- grid borders right/bottom -->
<div class="abs" style="left:822px;top:218px;width:1px;height:352px;background:#a6a6a6"></div>
<div class="abs" style="left:823px;top:199px;width:21px;height:398px;background:#e6e6e6"></div>
<!-- vertical scrollbar -->
<div class="abs" style="left:826px;top:216px;width:15px;height:340px;background:#d6d6d6"></div>
<div class="abs" style="left:826px;top:201px;width:15px;height:15px;background:#fff;border:1px solid #ababab"></div>
<div class="abs" style="left:826px;top:216px;width:15px;height:254px;background:#fff;border:1px solid #ababab"></div>
<div class="abs" style="left:826px;top:555px;width:15px;height:15px;background:#fff;border:1px solid #ababab"></div>
<svg class="abs" style="left:826px;top:201px" width="15" height="369" viewBox="0 0 15 369">
 <path d="M4 10 L7.500 6 L11 10 Z" fill="#777"/>
 <path d="M4 360 L7.500 364 L11 360 Z" fill="#777"/>
</svg>

<!-- sheet tab bar -->
<div class="abs" style="left:1px;top:570px;width:843px;height:27px;background:#e6e6e6"></div>
<div class="abs" style="left:1px;top:569px;width:822px;height:1px;background:#8c8c8c"></div>
<div class="abs" style="left:101px;top:569px;width:60px;height:25px;background:#fff"></div>
<div class="abs" style="left:101px;top:569px;width:1px;height:24px;background:#9a9a9a"></div>
<div class="abs" style="left:160px;top:569px;width:1px;height:24px;background:#c0c0c0"></div>
<div class="abs" style="left:101px;top:592px;width:60px;height:2px;background:#217346"></div>
<div class="t" style="left:113.00px;top:574.27px;font-size:12.5px;line-height:16px;color:#217346;font-weight:bold;letter-spacing:-0.442px;">Лист1</div>
<svg class="abs" style="left:190px;top:572px" width="24" height="24" viewBox="0 0 24 24">
 <circle cx="12" cy="10.800" r="7.300" fill="none" stroke="#666" stroke-width="1"/>
 <path d="M12 6.800 V14.800 M8 10.800 H16" stroke="#555" stroke-width="1.800" fill="none"/>
</svg>
<!-- horizontal scrollbar -->
<div class="abs" style="left:507px;top:579px;width:1.5px;height:1.5px;background:#a8a8a8"></div>
<div class="abs" style="left:507px;top:583px;width:1.5px;height:1.5px;background:#a8a8a8"></div>
<div class="abs" style="left:507px;top:587px;width:1.5px;height:1.5px;background:#a8a8a8"></div>
<div class="abs" style="left:539px;top:576px;width:270px;height:15px;background:#d6d6d6"></div>
<div class="abs" style="left:524px;top:576px;width:15px;height:15px;background:#fff;border:1px solid #ababab"></div>
<div class="abs" style="left:539px;top:576px;width:244px;height:15px;background:#fff;border:1px solid #ababab"></div>
<div class="abs" style="left:808px;top:576px;width:15px;height:15px;background:#fff;border:1px solid #ababab"></div>
<svg class="abs" style="left:524px;top:576px" width="300" height="15" viewBox="0 0 300 15">
 <path d="M9.500 4 L5.500 7.500 L9.500 11 Z" fill="#666"/>
 <path d="M290 4 L294 7.500 L290 11 Z" fill="#666"/>
</svg>
<!-- status bar -->
<div class="abs" style="left:1px;top:597px;width:843px;height:1px;background:#c8c8c8"></div>
<div class="abs" style="left:1px;top:598px;width:843px;height:20px;background:#f1f1f1"></div>
<div class="abs" style="left:1px;top:618px;width:843px;height:1px;background:#fbfbfb"></div>
<div class="abs" style="left:1px;top:60px;width:1px;height:559px;background:#f6f6f6"></div>
<div class="abs" style="left:843px;top:60px;width:1px;height:559px;background:#f6f6f6"></div>
<div class="abs" style="left:541px;top:598px;width:38px;height:20px;background:#c6c6c6"></div>
<div class="t" style="left:8.60px;top:599.84px;font-size:12px;line-height:16px;color:#444;letter-spacing:-0.250px;">Готово</div>
<div class="t" style="left:798.80px;top:600.12px;font-size:11.5px;line-height:15px;color:#444;letter-spacing:-1.137px;">100%</div>
<svg class="abs" style="left:0;top:598px" width="845" height="20" viewBox="0 0 845 20">
 <!-- macro icon -->
 <rect x="72.300" y="4" width="5.700" height="2" fill="#5f5f5f"/>
 <rect x="66" y="8" width="12" height="8" fill="#5f5f5f"/>
 <g fill="#f1f1f1">
  <rect x="67.300" y="9.400" width="2.500" height="1.300"/><rect x="70.800" y="9.400" width="2.500" height="1.300"/><rect x="74.300" y="9.400" width="2.500" height="1.300"/>
  <rect x="67.300" y="11.500" width="2.500" height="1.300"/><rect x="70.800" y="11.500" width="2.500" height="1.300"/><rect x="74.300" y="11.500" width="2.500" height="1.300"/>
  <rect x="67.300" y="13.600" width="2.500" height="1.300"/><rect x="70.800" y="13.600" width="2.500" height="1.300"/><rect x="74.300" y="13.600" width="2.500" height="1.300"/>
 </g>
 <circle cx="68" cy="6.200" r="3.600" fill="#f1f1f1"/>
 <circle cx="68" cy="6.200" r="2.900" fill="#5f5f5f"/>
 <!-- normal view -->
 <g fill="none" stroke="#5a5a5a" stroke-width="1.200">
  <rect x="553.500" y="3.800" width="12.500" height="11.500"/>
  <path d="M553.500 7.600 H566 M553.500 11.500 H566 M557.700 3.800 V15.300 M561.800 3.800 V15.300"/>
  <rect x="591.500" y="3.800" width="13" height="11.500"/>
  <rect x="594.800" y="6.500" width="6.500" height="6.200" stroke-width="1"/>
  <path d="M596.300 8.600 H599.800 M596.300 10.600 H599.800" stroke-width=".9"/>
  <rect x="629.500" y="3.800" width="13" height="11.500"/>
  <path d="M629.500 10.300 H637.600 V3.800 M633.600 3.800 V10.300" stroke-width="1.100"/>
 </g>
 <rect x="660" y="8.600" width="6" height="2" fill="#555"/>
 <rect x="670.500" y="9" width="99" height="1" fill="#8a8a8a"/>
 <rect x="718" y="4" width="4" height="11.500" fill="#555"/>
 <path d="M774 9.400 H782 M778 5.400 V13.400" stroke="#555" stroke-width="1.800" fill="none"/>
</svg>

<!-- watermark -->
<svg class="abs" style="left:0;top:540px" width="290" height="64" viewBox="0 540 290 64">
 <defs>
  <mask id="mH" maskUnits="userSpaceOnUse" x="0" y="540" width="290" height="64"><rect x="0" y="540" width="290" height="64" fill="#fff"/><g fill="none" stroke-linejoin="round" stroke="#000" stroke-width="5.200"><path d="M157.300 558.700 V581 M175 558.700 V581 M157.300 570.600 H175"/><path d="M184.500 572.300 H195.800 V569 Q195.800 566 192.800 566 H187.200 Q184.200 566 184.200 569 V575.300 Q184.200 578.300 187.200 578.300 H197.500"/><path d="M205.400 557.800 V581"/><path d="M215 586.300 V569 Q215 566 218 566 H225.800 Q228.800 566 228.800 569 V575.300 Q228.800 578.300 225.800 578.300 H215"/><path d="M238 572.300 H249.500 V569 Q249.500 566 246.500 566 H240.800 Q237.800 566 237.800 569 V575.300 Q237.800 578.300 240.800 578.300 H251.200"/><path d="M258.800 581 V569 Q258.800 566 261.800 566 H270"/></g></mask>
  <mask id="mO" maskUnits="userSpaceOnUse" x="0" y="540" width="290" height="64"><rect x="0" y="540" width="290" height="64" fill="#fff"/><g fill="none" stroke-linejoin="round" stroke="#000" stroke-width="6"><rect x="95.300" y="561.800" width="17.400" height="16.200" rx="5"/><path d="M139.500 561.800 H125 Q121.600 561.800 121.600 565.200 V566.500 Q121.600 569.900 125 569.900 H134.800 Q138.200 569.900 138.200 573.300 V574.600 Q138.200 578 134.800 578 H120.300"/></g></mask>
 </defs>
 <!-- monitor -->
 <rect x="23" y="545.500" width="60.500" height="48" rx="6" fill="rgba(255,255,255,0.55)" stroke="#c9c9c9" stroke-width="1"/>
 <rect x="26.700" y="549" width="53.300" height="41" rx="4.500" fill="none" stroke="#c2c2c2" stroke-width="2.600"/>
 <path d="M41.500 594 Q42 598.500 45 598.500 H58 Q61 598.500 61.500 594" fill="rgba(255,255,255,0.55)" stroke="#c9c9c9" stroke-width="1"/>
 <path d="M52.800 574.400 L36 557.500" stroke="#b9b9b9" stroke-width="2.800" stroke-linecap="round" fill="none"/>
 <path d="M30.500 552 L41.500 555.500 L34 563 Z" fill="#b9b9b9"/>
 <path d="M33 580 L29.500 582.700 L33 585.400 Z M56.500 580 L60 582.700 L56.500 585.400 Z" fill="#dcdcdc"/>
 <!-- OS -->
 <g fill="none" stroke-linejoin="round" stroke="rgba(255,255,255,0.85)" stroke-width="8" mask="url(#mO)"><rect x="95.300" y="561.800" width="17.400" height="16.200" rx="5"/><path d="M139.500 561.800 H125 Q121.600 561.800 121.600 565.200 V566.500 Q121.600 569.900 125 569.900 H134.800 Q138.200 569.900 138.200 573.300 V574.600 Q138.200 578 134.800 578 H120.300"/></g>
 <g fill="none" stroke-linejoin="round" stroke="rgba(243,120,145,0.55)" stroke-width="6"><rect x="95.300" y="561.800" width="17.400" height="16.200" rx="5"/><path d="M139.500 561.800 H125 Q121.600 561.800 121.600 565.200 V566.500 Q121.600 569.900 125 569.900 H134.800 Q138.200 569.900 138.200 573.300 V574.600 Q138.200 578 134.800 578 H120.300"/></g>
 <!-- Helper -->
 <g fill="none" stroke-linejoin="round" stroke="rgba(120,120,120,0.6)" stroke-width="7.200" mask="url(#mH)"><path d="M157.300 558.700 V581 M175 558.700 V581 M157.300 570.600 H175"/><path d="M184.500 572.300 H195.800 V569 Q195.800 566 192.800 566 H187.200 Q184.200 566 184.200 569 V575.300 Q184.200 578.300 187.200 578.300 H197.500"/><path d="M205.400 557.800 V581"/><path d="M215 586.300 V569 Q215 566 218 566 H225.800 Q228.800 566 228.800 569 V575.300 Q228.800 578.300 225.800 578.300 H215"/><path d="M238 572.300 H249.500 V569 Q249.500 566 246.500 566 H240.800 Q237.800 566 237.800 569 V575.300 Q237.800 578.300 240.800 578.300 H251.200"/><path d="M258.800 581 V569 Q258.800 566 261.800 566 H270"/></g>
 <g fill="none" stroke-linejoin="round" stroke="rgba(255,255,255,0.6)" stroke-width="5.200"><path d="M157.300 558.700 V581 M175 558.700 V581 M157.300 570.600 H175"/><path d="M184.500 572.300 H195.800 V569 Q195.800 566 192.800 566 H187.200 Q184.200 566 184.200 569 V575.300 Q184.200 578.300 187.200 578.300 H197.500"/><path d="M205.400 557.800 V581"/><path d="M215 586.300 V569 Q215 566 218 566 H225.800 Q228.800 566 228.800 569 V575.300 Q228.800 578.300 225.800 578.300 H215"/><path d="M238 572.300 H249.500 V569 Q249.500 566 246.500 566 H240.800 Q237.800 566 237.800 569 V575.300 Q237.800 578.300 240.800 578.300 H251.200"/><path d="M258.800 581 V569 Q258.800 566 261.800 566 H270"/></g>
</svg>

</div></body></html>
